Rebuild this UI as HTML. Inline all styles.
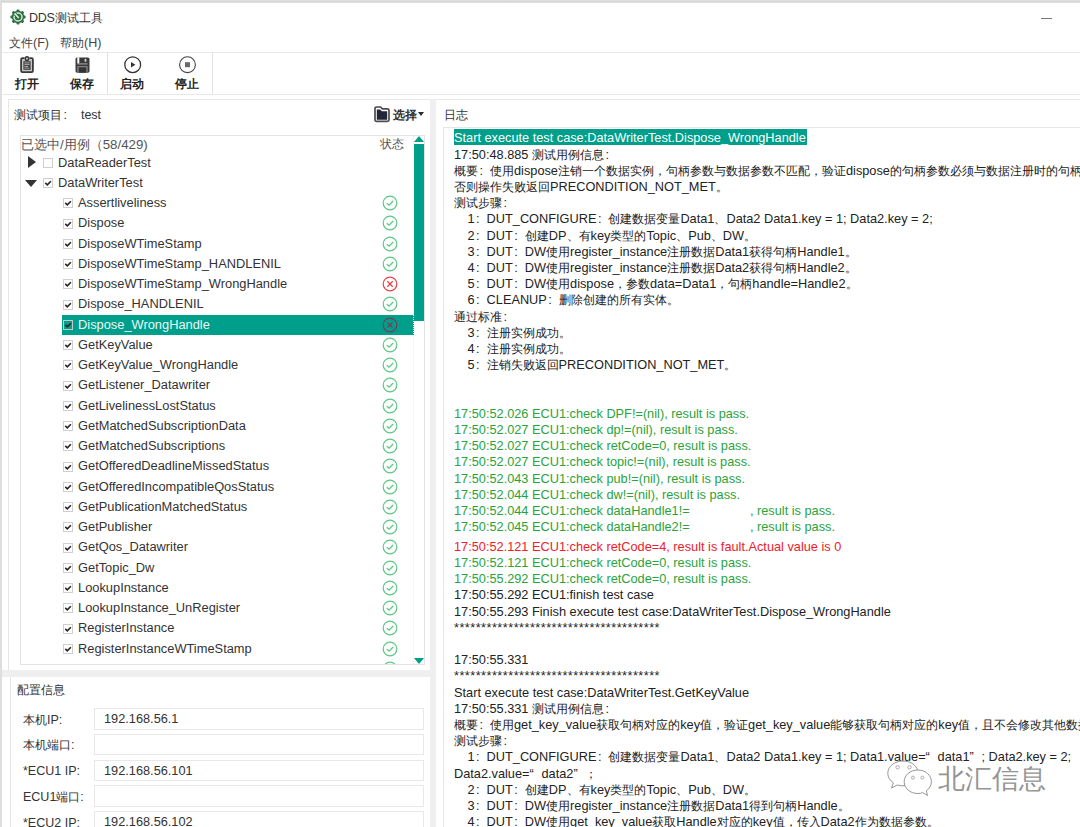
<!DOCTYPE html>
<html><head><meta charset="utf-8">
<style>
*{margin:0;padding:0;box-sizing:border-box}
html,body{width:1080px;height:827px;overflow:hidden;background:#fff}
body{position:relative;font-family:"Liberation Sans",sans-serif;color:#222;font-size:12.75px}
.a{position:absolute}
.c{font-size:12px}
.fw{display:inline-block;width:12px;text-align:left}
.fc{display:inline-block;width:12px;text-align:left;padding-left:1.5px}
#topbar{position:absolute;left:0;top:0;width:1080px;height:3.4px;background:linear-gradient(#e2e2e2,#d5d5d5 60%,#e6e6e6)}
#leftbar{position:absolute;left:0;top:0;width:2px;height:827px;background:#dedede}
#title{position:absolute;left:29px;top:10px;font-size:12.5px;letter-spacing:-0.3px;color:#333;white-space:pre}
#title .c{font-size:12px;letter-spacing:0}
#minbtn{position:absolute;left:1041px;top:18px;width:11px;height:1px;background:#7a7a7a}
.menu{position:absolute;top:34.5px;font-size:12.5px;color:#444;white-space:pre}
.menu .c{font-size:12px}
.fw{display:inline-block;width:12px;text-align:left}
.fc{display:inline-block;width:12px;text-align:left;padding-left:1.5px}
.hl1{position:absolute;left:2px;width:1078px;height:1px;background:#e8e8e8}
.sep{position:absolute;top:52px;width:1px;height:42px;background:#e3e3e3}
.tb{position:absolute;top:76px;font-size:12px;font-weight:bold;color:#222;white-space:pre}
#lp{position:absolute;left:8px;top:99px;width:422px;height:571px;border:1px solid #e6e6e6;border-right:none;border-bottom:none;background:#fff}
#gapv{position:absolute;left:430px;top:99px;width:6px;height:728px;background:#efefef}
#gaph{position:absolute;left:2px;top:670px;width:428px;height:7px;background:#efefef}
#cp{position:absolute;left:10px;top:677px;width:420px;height:150px;border-left:1px solid #e6e6e6;background:#fff}
#rp{position:absolute;left:436px;top:99px;width:644px;height:728px;border-top:1px solid #e6e6e6;background:#fff}
#tree{position:absolute;left:20px;top:135px;width:405px;height:530px;border:1px solid #e3e3e3;background:#fff;overflow:hidden}
.t{position:absolute;font-size:12.5px;color:#555;white-space:pre;line-height:14px}
.t .c{font-size:12px}
.t.hd{font-size:13.3px}
.t.hd .c{font-size:12.7px}
.fw{display:inline-block;width:12px;text-align:left}
.fc{display:inline-block;width:12px;text-align:left;padding-left:1.5px}
.tn{position:absolute;font-size:12.85px;color:#333;white-space:pre;line-height:18px}
.tn.w{color:#eaf7f4}
.cb{position:absolute;width:10px;height:10px;border:1px solid #cfcfcf;background:#fff}
.cb svg{position:absolute;left:0;top:0;display:block}
.cb.s{border-color:#c9c9c9;background:transparent}

.tri-r{position:absolute;width:0;height:0;border-top:6.5px solid transparent;border-bottom:6.5px solid transparent;border-left:8px solid #333}
.tri-d{position:absolute;width:0;height:0;border-left:6px solid transparent;border-right:6px solid transparent;border-top:7px solid #333}
.sel{position:absolute;left:61.5px;width:352px;height:20px;background:#009f8b}
.st{position:absolute;width:16px;height:16px}
.st svg{display:block}
#sbtrack{position:absolute;left:413px;top:136px;width:11px;height:528px;border-left:1px dotted #ebebeb}
#sbup{position:absolute;left:414px;top:136px;width:0;height:0;border-left:5px solid transparent;border-right:5px solid transparent;border-bottom:6px solid #009f8b}
#sbthumb{position:absolute;left:414px;top:143.7px;width:10px;height:177.4px;background:#009f8b}
#sbdn{position:absolute;left:414px;top:658px;width:0;height:0;border-left:5px solid transparent;border-right:5px solid transparent;border-top:6px solid #009f8b}
#logbox{position:absolute;left:443px;top:127px;width:640px;height:705px;border:1px solid #e6e6e6;background:#fff;overflow:hidden}
.ll{position:absolute;left:454px;white-space:pre;line-height:17.2px;height:16px;color:#222}
.ll.hl{background:#009f8b;color:#fff;left:453.5px;padding-left:0.5px;padding-right:1px}
.ll.g{color:#2aa33a}
.ll.r{color:#f0202a}
.ll.ast{letter-spacing:0.46px}
.lab{position:absolute;left:23px;font-size:12.5px;color:#333;white-space:pre;line-height:15px}
.lab .c{font-size:12px}
.fw{display:inline-block;width:12px;text-align:left}
.fc{display:inline-block;width:12px;text-align:left;padding-left:1.5px}
.inp{position:absolute;left:94px;width:330px;height:21.5px;border:1px solid #e8e8e8;background:#fff}
.inp span{position:absolute;left:9px;top:2px;font-size:12.75px;color:#333;white-space:pre;line-height:16px}
</style></head><body>
<div id="topbar"></div>
<div id="leftbar"></div>
<svg class="a" style="left:9.5px;top:9.4px" width="16" height="16" viewBox="0 0 16 16">
 <g fill="#2f7043">
  <circle cx="8" cy="8" r="6.2"/>
  <g>
   <rect x="6.5" y="0.4" width="3" height="3" rx="1"/>
   <rect x="6.5" y="12.6" width="3" height="3" rx="1"/>
   <rect x="0.4" y="6.5" width="3" height="3" rx="1"/>
   <rect x="12.6" y="6.5" width="3" height="3" rx="1"/>
  </g>
  <g transform="rotate(45 8 8)"><rect x="6.5" y="0.4" width="3" height="3" rx="1"/>
   <rect x="6.5" y="12.6" width="3" height="3" rx="1"/>
   <rect x="0.4" y="6.5" width="3" height="3" rx="1"/>
   <rect x="12.6" y="6.5" width="3" height="3" rx="1"/></g>
 </g>
 <circle cx="8" cy="8" r="4" fill="none" stroke="#d3e6d8" stroke-width="1.5"/>
 <circle cx="5.2" cy="5.2" r="1.9" fill="#2f7043"/>
 <path d="M4.6 4.4 L5.6 5.6 L8.8 9" stroke="#e6f1e8" stroke-width="1.5" fill="none"/>
 <path d="M4.5 5.8 L5.8 4.5" stroke="#e6f1e8" stroke-width="1" fill="none"/>
</svg>
<div id="title">DDS<span class="c">测试工具</span></div>
<div id="minbtn"></div>
<div class="menu" style="left:9px"><span class="c">文件</span>(F)</div>
<div class="menu" style="left:60px"><span class="c">帮助</span>(H)</div>
<div class="hl1" style="top:52px"></div>
<div class="hl1" style="top:93.5px"></div>
<div class="sep" style="left:107px"></div>
<div class="sep" style="left:212px"></div>
<!-- toolbar icons -->
<svg class="a" style="left:20px;top:56px" width="14" height="17" viewBox="0 0 14 17">
 <rect x="1.1" y="2.2" width="11.8" height="13.9" rx="1.3" fill="#c4c4c4" stroke="#3a3a3a" stroke-width="1.8"/>
 <rect x="4.5" y="0.6" width="5" height="3" fill="#fff"/>
 <circle cx="7" cy="2.6" r="1.8" fill="#bbb" stroke="#3a3a3a" stroke-width="1.5"/>
 <rect x="3.4" y="5.2" width="7.2" height="8.6" fill="#3e3e3e"/>
 <path d="M4.4 6.9 H9.6 M4.4 8.6 H9.6 M4.4 10.4 H8.2 M4.4 12.1 H9.2" stroke="#b5b5b5" stroke-width="0.9"/>
</svg>
<svg class="a" style="left:74.5px;top:56.5px" width="15" height="16" viewBox="0 0 15 16">
 <rect x="0.5" y="0.5" width="14" height="15.2" rx="1.6" fill="#3a3a3a"/>
 <rect x="2.3" y="0.3" width="2" height="6.2" fill="#fff"/>
 <rect x="2.3" y="6.3" width="10.3" height="1.2" fill="#9a9a9a"/>
 <rect x="9.6" y="1.8" width="1.8" height="3" rx="0.6" fill="#cfcfcf"/>
 <rect x="2.3" y="9.2" width="10.3" height="6.5" fill="#8e8e8e"/>
 <rect x="3.6" y="10.3" width="7.8" height="5.4" fill="#333"/>
</svg>
<svg class="a" style="left:124px;top:55.5px" width="18" height="18" viewBox="0 0 18 18">
 <circle cx="8.7" cy="8.7" r="7.9" fill="none" stroke="#333" stroke-width="1.3"/>
 <path d="M7 6 L11.4 8.7 L7 11.4 Z" fill="#333"/>
</svg>
<svg class="a" style="left:179px;top:55.5px" width="18" height="18" viewBox="0 0 18 18">
 <circle cx="8.5" cy="8.7" r="7.9" fill="none" stroke="#444" stroke-width="1.1"/>
 <rect x="6" y="6.2" width="5" height="5" fill="#6a6a6a"/>
</svg>
<div class="tb" style="left:15px"><span class="c">打开</span></div>
<div class="tb" style="left:70px"><span class="c">保存</span></div>
<div class="tb" style="left:120px"><span class="c">启动</span></div>
<div class="tb" style="left:175px"><span class="c">停止</span></div>

<div id="gapv"></div>
<div id="gaph"></div>
<div id="lp"></div>
<div id="cp"></div>
<div id="rp"></div>
<div class="t" style="left:14px;top:108px;color:#333"><span class="c">测试项目</span><span class="fc">:</span>&nbsp;&nbsp;test</div>
<svg class="a" style="left:374px;top:106px" width="16" height="17" viewBox="0 0 16 17">
 <path d="M1 2.6 Q1 1 2.6 1 H6.6 L8.4 2.8 H13.4 Q15 2.8 15 4.4 V13.8 Q15 15.4 13.4 15.4 H2.6 Q1 15.4 1 13.8 Z" fill="#fff" stroke="#4c4c50" stroke-width="1.7"/>
 <path d="M2.8 3.6 H6.1 L7.8 5.2 H13.2 V13.7 H2.8 Z" fill="#23263a"/>
</svg>
<div class="t" style="left:393px;top:108px;font-weight:bold;color:#333"><span class="c">选择</span></div>
<div class="a" style="left:417.5px;top:112.3px;width:0;height:0;border-left:3.6px solid transparent;border-right:3.6px solid transparent;border-top:4.5px solid #2a2a2a"></div>
<div class="t" style="left:444px;top:108px;color:#333"><span class="c">日志</span></div>

<div id="tree"></div>
<div style="position:absolute;left:0;top:0;width:1080px;height:827px;clip-path:inset(136px 656px 163px 21px)">
<div class="t hd" style="left:21px;top:137.5px;"><span class="c">已选中</span>/<span class="c">用例（</span>58/429)</div>
<div class="t" style="left:380px;top:137px;"><span class="c">状态</span></div>
<div class="tri-r" style="left:28px;top:156.1px"></div>
<div class="cb" style="left:43px;top:158.1px"></div>
<div class="tn" style="left:58px;top:153.6px">DataReaderTest</div>
<div class="tri-d" style="left:25px;top:179.5px"></div>
<div class="cb on" style="left:43px;top:178.3px"><svg width="8" height="8" viewBox="0 0 8 8"><path d="M1.3 3.9 L3.3 5.8 L6.9 2.2" fill="none" stroke="#262626" stroke-width="1.6"/></svg></div>
<div class="tn" style="left:58px;top:173.8px">DataWriterTest</div>
<div class="cb on" style="left:63.2px;top:198.3px"><svg width="8" height="8" viewBox="0 0 8 8"><path d="M1.3 3.9 L3.3 5.8 L6.9 2.2" fill="none" stroke="#262626" stroke-width="1.6"/></svg></div>
<div class="tn" style="left:78px;top:194.1px">Assertliveliness</div>
<div class="st" style="left:382px;top:195.1px"><svg width="16" height="16" viewBox="0 0 16 16"><circle cx="8" cy="8" r="6.8" fill="none" stroke="#5cc782" stroke-width="1.2"/><path d="M4.8 8.2 L7 10.2 L11.2 6" fill="none" stroke="#5cc782" stroke-width="1.3"/></svg></div>
<div class="cb on" style="left:63.2px;top:218.5px"><svg width="8" height="8" viewBox="0 0 8 8"><path d="M1.3 3.9 L3.3 5.8 L6.9 2.2" fill="none" stroke="#262626" stroke-width="1.6"/></svg></div>
<div class="tn" style="left:78px;top:214.3px">Dispose</div>
<div class="st" style="left:382px;top:215.3px"><svg width="16" height="16" viewBox="0 0 16 16"><circle cx="8" cy="8" r="6.8" fill="none" stroke="#5cc782" stroke-width="1.2"/><path d="M4.8 8.2 L7 10.2 L11.2 6" fill="none" stroke="#5cc782" stroke-width="1.3"/></svg></div>
<div class="cb on" style="left:63.2px;top:238.8px"><svg width="8" height="8" viewBox="0 0 8 8"><path d="M1.3 3.9 L3.3 5.8 L6.9 2.2" fill="none" stroke="#262626" stroke-width="1.6"/></svg></div>
<div class="tn" style="left:78px;top:234.6px">DisposeWTimeStamp</div>
<div class="st" style="left:382px;top:235.6px"><svg width="16" height="16" viewBox="0 0 16 16"><circle cx="8" cy="8" r="6.8" fill="none" stroke="#5cc782" stroke-width="1.2"/><path d="M4.8 8.2 L7 10.2 L11.2 6" fill="none" stroke="#5cc782" stroke-width="1.3"/></svg></div>
<div class="cb on" style="left:63.2px;top:259.1px"><svg width="8" height="8" viewBox="0 0 8 8"><path d="M1.3 3.9 L3.3 5.8 L6.9 2.2" fill="none" stroke="#262626" stroke-width="1.6"/></svg></div>
<div class="tn" style="left:78px;top:254.9px">DisposeWTimeStamp_HANDLENIL</div>
<div class="st" style="left:382px;top:255.9px"><svg width="16" height="16" viewBox="0 0 16 16"><circle cx="8" cy="8" r="6.8" fill="none" stroke="#5cc782" stroke-width="1.2"/><path d="M4.8 8.2 L7 10.2 L11.2 6" fill="none" stroke="#5cc782" stroke-width="1.3"/></svg></div>
<div class="cb on" style="left:63.2px;top:279.3px"><svg width="8" height="8" viewBox="0 0 8 8"><path d="M1.3 3.9 L3.3 5.8 L6.9 2.2" fill="none" stroke="#262626" stroke-width="1.6"/></svg></div>
<div class="tn" style="left:78px;top:275.1px">DisposeWTimeStamp_WrongHandle</div>
<div class="st" style="left:382px;top:276.1px"><svg width="16" height="16" viewBox="0 0 16 16"><circle cx="8" cy="8" r="6.8" fill="none" stroke="#ea3f45" stroke-width="1.2"/><path d="M5.3 5.3 L10.7 10.7 M10.7 5.3 L5.3 10.7" fill="none" stroke="#ea3f45" stroke-width="1.3"/></svg></div>
<div class="cb on" style="left:63.2px;top:299.6px"><svg width="8" height="8" viewBox="0 0 8 8"><path d="M1.3 3.9 L3.3 5.8 L6.9 2.2" fill="none" stroke="#262626" stroke-width="1.6"/></svg></div>
<div class="tn" style="left:78px;top:295.4px">Dispose_HANDLENIL</div>
<div class="st" style="left:382px;top:296.4px"><svg width="16" height="16" viewBox="0 0 16 16"><circle cx="8" cy="8" r="6.8" fill="none" stroke="#5cc782" stroke-width="1.2"/><path d="M4.8 8.2 L7 10.2 L11.2 6" fill="none" stroke="#5cc782" stroke-width="1.3"/></svg></div>
<div class="sel" style="top:314.6px"></div>
<div class="cb on s" style="left:63.2px;top:319.8px"><svg width="8" height="8" viewBox="0 0 8 8"><path d="M1.3 3.9 L3.3 5.8 L6.9 2.2" fill="none" stroke="#262626" stroke-width="1.6"/></svg></div>
<div class="tn w" style="left:78px;top:315.6px">Dispose_WrongHandle</div>
<div class="st" style="left:382px;top:316.6px"><svg width="16" height="16" viewBox="0 0 16 16"><circle cx="8" cy="8" r="6.8" fill="none" stroke="#7a3b55" stroke-width="1.2"/><path d="M5.6 5.6 L10.4 10.4 M10.4 5.6 L5.6 10.4" fill="none" stroke="#8a3050" stroke-width="1.3"/></svg></div>
<div class="cb on" style="left:63.2px;top:340.1px"><svg width="8" height="8" viewBox="0 0 8 8"><path d="M1.3 3.9 L3.3 5.8 L6.9 2.2" fill="none" stroke="#262626" stroke-width="1.6"/></svg></div>
<div class="tn" style="left:78px;top:335.9px">GetKeyValue</div>
<div class="st" style="left:382px;top:336.9px"><svg width="16" height="16" viewBox="0 0 16 16"><circle cx="8" cy="8" r="6.8" fill="none" stroke="#5cc782" stroke-width="1.2"/><path d="M4.8 8.2 L7 10.2 L11.2 6" fill="none" stroke="#5cc782" stroke-width="1.3"/></svg></div>
<div class="cb on" style="left:63.2px;top:360.3px"><svg width="8" height="8" viewBox="0 0 8 8"><path d="M1.3 3.9 L3.3 5.8 L6.9 2.2" fill="none" stroke="#262626" stroke-width="1.6"/></svg></div>
<div class="tn" style="left:78px;top:356.1px">GetKeyValue_WrongHandle</div>
<div class="st" style="left:382px;top:357.1px"><svg width="16" height="16" viewBox="0 0 16 16"><circle cx="8" cy="8" r="6.8" fill="none" stroke="#5cc782" stroke-width="1.2"/><path d="M4.8 8.2 L7 10.2 L11.2 6" fill="none" stroke="#5cc782" stroke-width="1.3"/></svg></div>
<div class="cb on" style="left:63.2px;top:380.6px"><svg width="8" height="8" viewBox="0 0 8 8"><path d="M1.3 3.9 L3.3 5.8 L6.9 2.2" fill="none" stroke="#262626" stroke-width="1.6"/></svg></div>
<div class="tn" style="left:78px;top:376.4px">GetListener_Datawriter</div>
<div class="st" style="left:382px;top:377.4px"><svg width="16" height="16" viewBox="0 0 16 16"><circle cx="8" cy="8" r="6.8" fill="none" stroke="#5cc782" stroke-width="1.2"/><path d="M4.8 8.2 L7 10.2 L11.2 6" fill="none" stroke="#5cc782" stroke-width="1.3"/></svg></div>
<div class="cb on" style="left:63.2px;top:400.8px"><svg width="8" height="8" viewBox="0 0 8 8"><path d="M1.3 3.9 L3.3 5.8 L6.9 2.2" fill="none" stroke="#262626" stroke-width="1.6"/></svg></div>
<div class="tn" style="left:78px;top:396.6px">GetLivelinessLostStatus</div>
<div class="st" style="left:382px;top:397.6px"><svg width="16" height="16" viewBox="0 0 16 16"><circle cx="8" cy="8" r="6.8" fill="none" stroke="#5cc782" stroke-width="1.2"/><path d="M4.8 8.2 L7 10.2 L11.2 6" fill="none" stroke="#5cc782" stroke-width="1.3"/></svg></div>
<div class="cb on" style="left:63.2px;top:421.1px"><svg width="8" height="8" viewBox="0 0 8 8"><path d="M1.3 3.9 L3.3 5.8 L6.9 2.2" fill="none" stroke="#262626" stroke-width="1.6"/></svg></div>
<div class="tn" style="left:78px;top:416.9px">GetMatchedSubscriptionData</div>
<div class="st" style="left:382px;top:417.9px"><svg width="16" height="16" viewBox="0 0 16 16"><circle cx="8" cy="8" r="6.8" fill="none" stroke="#5cc782" stroke-width="1.2"/><path d="M4.8 8.2 L7 10.2 L11.2 6" fill="none" stroke="#5cc782" stroke-width="1.3"/></svg></div>
<div class="cb on" style="left:63.2px;top:441.3px"><svg width="8" height="8" viewBox="0 0 8 8"><path d="M1.3 3.9 L3.3 5.8 L6.9 2.2" fill="none" stroke="#262626" stroke-width="1.6"/></svg></div>
<div class="tn" style="left:78px;top:437.1px">GetMatchedSubscriptions</div>
<div class="st" style="left:382px;top:438.1px"><svg width="16" height="16" viewBox="0 0 16 16"><circle cx="8" cy="8" r="6.8" fill="none" stroke="#5cc782" stroke-width="1.2"/><path d="M4.8 8.2 L7 10.2 L11.2 6" fill="none" stroke="#5cc782" stroke-width="1.3"/></svg></div>
<div class="cb on" style="left:63.2px;top:461.6px"><svg width="8" height="8" viewBox="0 0 8 8"><path d="M1.3 3.9 L3.3 5.8 L6.9 2.2" fill="none" stroke="#262626" stroke-width="1.6"/></svg></div>
<div class="tn" style="left:78px;top:457.4px">GetOfferedDeadlineMissedStatus</div>
<div class="st" style="left:382px;top:458.4px"><svg width="16" height="16" viewBox="0 0 16 16"><circle cx="8" cy="8" r="6.8" fill="none" stroke="#5cc782" stroke-width="1.2"/><path d="M4.8 8.2 L7 10.2 L11.2 6" fill="none" stroke="#5cc782" stroke-width="1.3"/></svg></div>
<div class="cb on" style="left:63.2px;top:481.8px"><svg width="8" height="8" viewBox="0 0 8 8"><path d="M1.3 3.9 L3.3 5.8 L6.9 2.2" fill="none" stroke="#262626" stroke-width="1.6"/></svg></div>
<div class="tn" style="left:78px;top:477.6px">GetOfferedIncompatibleQosStatus</div>
<div class="st" style="left:382px;top:478.6px"><svg width="16" height="16" viewBox="0 0 16 16"><circle cx="8" cy="8" r="6.8" fill="none" stroke="#5cc782" stroke-width="1.2"/><path d="M4.8 8.2 L7 10.2 L11.2 6" fill="none" stroke="#5cc782" stroke-width="1.3"/></svg></div>
<div class="cb on" style="left:63.2px;top:502.1px"><svg width="8" height="8" viewBox="0 0 8 8"><path d="M1.3 3.9 L3.3 5.8 L6.9 2.2" fill="none" stroke="#262626" stroke-width="1.6"/></svg></div>
<div class="tn" style="left:78px;top:497.9px">GetPublicationMatchedStatus</div>
<div class="st" style="left:382px;top:498.9px"><svg width="16" height="16" viewBox="0 0 16 16"><circle cx="8" cy="8" r="6.8" fill="none" stroke="#5cc782" stroke-width="1.2"/><path d="M4.8 8.2 L7 10.2 L11.2 6" fill="none" stroke="#5cc782" stroke-width="1.3"/></svg></div>
<div class="cb on" style="left:63.2px;top:522.3px"><svg width="8" height="8" viewBox="0 0 8 8"><path d="M1.3 3.9 L3.3 5.8 L6.9 2.2" fill="none" stroke="#262626" stroke-width="1.6"/></svg></div>
<div class="tn" style="left:78px;top:518.1px">GetPublisher</div>
<div class="st" style="left:382px;top:519.1px"><svg width="16" height="16" viewBox="0 0 16 16"><circle cx="8" cy="8" r="6.8" fill="none" stroke="#5cc782" stroke-width="1.2"/><path d="M4.8 8.2 L7 10.2 L11.2 6" fill="none" stroke="#5cc782" stroke-width="1.3"/></svg></div>
<div class="cb on" style="left:63.2px;top:542.6px"><svg width="8" height="8" viewBox="0 0 8 8"><path d="M1.3 3.9 L3.3 5.8 L6.9 2.2" fill="none" stroke="#262626" stroke-width="1.6"/></svg></div>
<div class="tn" style="left:78px;top:538.4px">GetQos_Datawriter</div>
<div class="st" style="left:382px;top:539.4px"><svg width="16" height="16" viewBox="0 0 16 16"><circle cx="8" cy="8" r="6.8" fill="none" stroke="#5cc782" stroke-width="1.2"/><path d="M4.8 8.2 L7 10.2 L11.2 6" fill="none" stroke="#5cc782" stroke-width="1.3"/></svg></div>
<div class="cb on" style="left:63.2px;top:562.8px"><svg width="8" height="8" viewBox="0 0 8 8"><path d="M1.3 3.9 L3.3 5.8 L6.9 2.2" fill="none" stroke="#262626" stroke-width="1.6"/></svg></div>
<div class="tn" style="left:78px;top:558.6px">GetTopic_Dw</div>
<div class="st" style="left:382px;top:559.6px"><svg width="16" height="16" viewBox="0 0 16 16"><circle cx="8" cy="8" r="6.8" fill="none" stroke="#5cc782" stroke-width="1.2"/><path d="M4.8 8.2 L7 10.2 L11.2 6" fill="none" stroke="#5cc782" stroke-width="1.3"/></svg></div>
<div class="cb on" style="left:63.2px;top:583.1px"><svg width="8" height="8" viewBox="0 0 8 8"><path d="M1.3 3.9 L3.3 5.8 L6.9 2.2" fill="none" stroke="#262626" stroke-width="1.6"/></svg></div>
<div class="tn" style="left:78px;top:578.9px">LookupInstance</div>
<div class="st" style="left:382px;top:579.9px"><svg width="16" height="16" viewBox="0 0 16 16"><circle cx="8" cy="8" r="6.8" fill="none" stroke="#5cc782" stroke-width="1.2"/><path d="M4.8 8.2 L7 10.2 L11.2 6" fill="none" stroke="#5cc782" stroke-width="1.3"/></svg></div>
<div class="cb on" style="left:63.2px;top:603.3px"><svg width="8" height="8" viewBox="0 0 8 8"><path d="M1.3 3.9 L3.3 5.8 L6.9 2.2" fill="none" stroke="#262626" stroke-width="1.6"/></svg></div>
<div class="tn" style="left:78px;top:599.1px">LookupInstance_UnRegister</div>
<div class="st" style="left:382px;top:600.1px"><svg width="16" height="16" viewBox="0 0 16 16"><circle cx="8" cy="8" r="6.8" fill="none" stroke="#5cc782" stroke-width="1.2"/><path d="M4.8 8.2 L7 10.2 L11.2 6" fill="none" stroke="#5cc782" stroke-width="1.3"/></svg></div>
<div class="cb on" style="left:63.2px;top:623.6px"><svg width="8" height="8" viewBox="0 0 8 8"><path d="M1.3 3.9 L3.3 5.8 L6.9 2.2" fill="none" stroke="#262626" stroke-width="1.6"/></svg></div>
<div class="tn" style="left:78px;top:619.4px">RegisterInstance</div>
<div class="st" style="left:382px;top:620.4px"><svg width="16" height="16" viewBox="0 0 16 16"><circle cx="8" cy="8" r="6.8" fill="none" stroke="#5cc782" stroke-width="1.2"/><path d="M4.8 8.2 L7 10.2 L11.2 6" fill="none" stroke="#5cc782" stroke-width="1.3"/></svg></div>
<div class="cb on" style="left:63.2px;top:643.8px"><svg width="8" height="8" viewBox="0 0 8 8"><path d="M1.3 3.9 L3.3 5.8 L6.9 2.2" fill="none" stroke="#262626" stroke-width="1.6"/></svg></div>
<div class="tn" style="left:78px;top:639.6px">RegisterInstanceWTimeStamp</div>
<div class="st" style="left:382px;top:640.6px"><svg width="16" height="16" viewBox="0 0 16 16"><circle cx="8" cy="8" r="6.8" fill="none" stroke="#5cc782" stroke-width="1.2"/><path d="M4.8 8.2 L7 10.2 L11.2 6" fill="none" stroke="#5cc782" stroke-width="1.3"/></svg></div>
<div class="cb on" style="left:63.2px;top:664.1px"><svg width="8" height="8" viewBox="0 0 8 8"><path d="M1.3 3.9 L3.3 5.8 L6.9 2.2" fill="none" stroke="#262626" stroke-width="1.6"/></svg></div>
<div class="tn" style="left:78px;top:659.9px">RegisterInstanceX</div>
<div class="st" style="left:382px;top:660.9px"><svg width="16" height="16" viewBox="0 0 16 16"><circle cx="8" cy="8" r="6.8" fill="none" stroke="#5cc782" stroke-width="1.2"/><path d="M4.8 8.2 L7 10.2 L11.2 6" fill="none" stroke="#5cc782" stroke-width="1.3"/></svg></div>
</div>
<div id="sbtrack"></div>
<div id="sbup"></div>
<div id="sbthumb"></div>
<div id="sbdn"></div>

<div id="logbox"></div>
<div class="ll hl" style="top:129.3px;">Start execute test case:DataWriterTest.Dispose_WrongHandle</div>
<div class="ll " style="top:145.5px;">17:50:48.885 <span class="c">测试用例信息</span><span class="fc">:</span></div>
<div class="ll " style="top:161.7px;"><span class="c">概要</span><span class="fc">:</span><span class="c">使用</span>dispose<span class="c">注销一个数据实例，句柄参数与数据参数不匹配，验证</span>dispose<span class="c">的句柄参数必须与数据注册时的句柄一致，</span></div>
<div class="ll " style="top:177.9px;"><span class="c">否则操作失败返回</span>PRECONDITION_NOT_MET<span class="c">。</span></div>
<div class="ll " style="top:194.1px;"><span class="c">测试步骤</span><span class="fc">:</span></div>
<div class="ll " style="top:210.3px;padding-left:13.5px;">1<span class="fc">:</span>DUT_CONFIGURE<span class="fc">:</span><span class="c">创建数据变量</span>Data1<span class="c">、</span>Data2 Data1.key = 1; Data2.key = 2;</div>
<div class="ll " style="top:226.5px;padding-left:13.5px;">2<span class="fc">:</span>DUT<span class="fc">:</span><span class="c">创建</span>DP<span class="c">、有</span>key<span class="c">类型的</span>Topic<span class="c">、</span>Pub<span class="c">、</span>DW<span class="c">。</span></div>
<div class="ll " style="top:242.7px;padding-left:13.5px;">3<span class="fc">:</span>DUT<span class="fc">:</span>DW<span class="c">使用</span>register_instance<span class="c">注册数据</span>Data1<span class="c">获得句柄</span>Handle1<span class="c">。</span></div>
<div class="ll " style="top:258.9px;padding-left:13.5px;">4<span class="fc">:</span>DUT<span class="fc">:</span>DW<span class="c">使用</span>register_instance<span class="c">注册数据</span>Data2<span class="c">获得句柄</span>Handle2<span class="c">。</span></div>
<div class="ll " style="top:275.1px;padding-left:13.5px;">5<span class="fc">:</span>DUT<span class="fc">:</span>DW<span class="c">使用</span>dispose<span class="c">，参数</span>data=Data1<span class="c">，句柄</span>handle=Handle2<span class="c">。</span></div>
<div class="ll " style="top:291.3px;padding-left:13.5px;">6<span class="fc">:</span>CLEANUP<span class="fc">:</span><span class="c">删除创建的所有实体。</span></div>
<div class="ll " style="top:307.5px;"><span class="c">通过标准</span><span class="fc">:</span></div>
<div class="ll " style="top:323.7px;padding-left:13.5px;">3<span class="fc">:</span><span class="c">注册实例成功。</span></div>
<div class="ll " style="top:339.9px;padding-left:13.5px;">4<span class="fc">:</span><span class="c">注册实例成功。</span></div>
<div class="ll " style="top:356.1px;padding-left:13.5px;">5<span class="fc">:</span><span class="c">注销失败返回</span>PRECONDITION_NOT_MET<span class="c">。</span></div>
<div class="ll g" style="top:404.7px;">17:50:52.026 ECU1:check DPF!=(nil), result is pass.</div>
<div class="ll g" style="top:420.9px;">17:50:52.027 ECU1:check dp!=(nil), result is pass.</div>
<div class="ll g" style="top:437.1px;">17:50:52.027 ECU1:check retCode=0, result is pass.</div>
<div class="ll g" style="top:453.3px;">17:50:52.027 ECU1:check topic!=(nil), result is pass.</div>
<div class="ll g" style="top:469.5px;">17:50:52.043 ECU1:check pub!=(nil), result is pass.</div>
<div class="ll g" style="top:485.7px;">17:50:52.044 ECU1:check dw!=(nil), result is pass.</div>
<div class="ll g" style="top:501.9px;">17:50:52.044 ECU1:check dataHandle1!=                 , result is pass.</div>
<div class="ll g" style="top:518.1px;">17:50:52.045 ECU1:check dataHandle2!=                 , result is pass.</div>
<div class="ll r" style="top:537.8px;">17:50:52.121 ECU1:check retCode=4, result is fault.Actual value is 0</div>
<div class="ll g" style="top:554.0px;">17:50:52.121 ECU1:check retCode=0, result is pass.</div>
<div class="ll g" style="top:570.2px;">17:50:55.292 ECU1:check retCode=0, result is pass.</div>
<div class="ll " style="top:586.4px;">17:50:55.292 ECU1:finish test case</div>
<div class="ll " style="top:602.6px;">17:50:55.293 Finish execute test case:DataWriterTest.Dispose_WrongHandle</div>
<div class="ll ast" style="top:618.8px;">**************************************</div>
<div class="ll " style="top:651.2px;">17:50:55.331</div>
<div class="ll ast" style="top:667.4px;">**************************************</div>
<div class="ll " style="top:683.6px;">Start execute test case:DataWriterTest.GetKeyValue</div>
<div class="ll " style="top:699.8px;">17:50:55.331 <span class="c">测试用例信息</span><span class="fc">:</span></div>
<div class="ll " style="top:716.0px;"><span class="c">概要</span><span class="fc">:</span><span class="c">使用</span>get_key_value<span class="c">获取句柄对应的</span>key<span class="c">值，验证</span>get_key_value<span class="c">能够获取句柄对应的</span>key<span class="c">值，且不会修改其他数据。</span></div>
<div class="ll " style="top:732.2px;"><span class="c">测试步骤</span><span class="fc">:</span></div>
<div class="ll " style="top:748.4px;padding-left:13.5px;">1<span class="fc">:</span>DUT_CONFIGURE<span class="fc">:</span><span class="c">创建数据变量</span>Data1<span class="c">、</span>Data2 Data1.key = 1; Data1.value=<span class="fw">“</span>data1<span class="fw">”</span>; Data2.key = 2;</div>
<div class="ll " style="top:764.6px;">Data2.value=<span class="fw">“</span>data2<span class="fw">”</span><span class="c">；</span></div>
<div class="ll " style="top:780.8px;padding-left:13.5px;">2<span class="fc">:</span>DUT<span class="fc">:</span><span class="c">创建</span>DP<span class="c">、有</span>key<span class="c">类型的</span>Topic<span class="c">、</span>Pub<span class="c">、</span>DW<span class="c">。</span></div>
<div class="ll " style="top:797.0px;padding-left:13.5px;">3<span class="fc">:</span>DUT<span class="fc">:</span>DW<span class="c">使用</span>register_instance<span class="c">注册数据</span>Data1<span class="c">得到句柄</span>Handle<span class="c">。</span></div>
<div class="ll " style="top:813.2px;padding-left:13.5px;">4<span class="fc">:</span>DUT<span class="fc">:</span>DW<span class="c">使用</span>get_key_value<span class="c">获取</span>Handle<span class="c">对应的</span>key<span class="c">值，传入</span>Data2<span class="c">作为数据参数。</span></div>

<div class="t" style="left:17px;top:683px;color:#333"><span class="c">配置信息</span></div>
<div class="lab" style="top:712.7px"><span class="c">本机</span>IP:</div>
<div class="inp" style="top:708.2px"><span>192.168.56.1</span></div>
<div class="lab" style="top:738.4px"><span class="c">本机端口</span>:</div>
<div class="inp" style="top:733.9px"><span></span></div>
<div class="lab" style="top:764.1px">*ECU1 IP:</div>
<div class="inp" style="top:759.6px"><span>192.168.56.101</span></div>
<div class="lab" style="top:789.8px">ECU1<span class="c">端口</span>:</div>
<div class="inp" style="top:785.3px"><span></span></div>
<div class="lab" style="top:815.5px">*ECU2 IP:</div>
<div class="inp" style="top:811.0px"><span>192.168.56.102</span></div>
<svg class="a" style="left:884px;top:757px" width="52" height="42" viewBox="884 757 52 42">
 <path d="M903 761 C894.5 761 887.8 766.5 887.8 773.3 C887.8 777.2 890 780.6 893.4 782.8 L891.5 788 L897.3 785 C899.2 785.5 901.1 785.8 903 785.8 C911.5 785.8 918.2 780.3 918.2 773.3 C918.2 766.5 911.5 761 903 761 Z" fill="#fff" stroke="#8a8a8a" stroke-width="0.9"/>
 <circle cx="897.6" cy="767.3" r="1.7" fill="#fff" stroke="#999" stroke-width="0.8"/>
 <circle cx="909.5" cy="767.3" r="1.7" fill="#fff" stroke="#999" stroke-width="0.8"/>
 <path d="M917.8 770 C910.2 770 904.2 775.2 904.2 781.7 C904.2 788.3 910.2 793.5 917.8 793.5 C919.5 793.5 921.2 793.2 922.7 792.7 L927.5 795.5 L926.3 790.8 C929.5 788.7 931.4 785.400 931.4 781.7 C931.4 775.2 925.4 770 917.8 770 Z" fill="#fff" stroke="#8a8a8a" stroke-width="0.9"/>
 <circle cx="913" cy="777.6" r="1.5" fill="#fff" stroke="#999" stroke-width="0.8"/>
 <circle cx="922.4" cy="777.6" r="1.5" fill="#fff" stroke="#999" stroke-width="0.8"/>
</svg>
<div class="a" style="left:938px;top:761px;font-size:26.5px;font-weight:100;color:#959595;white-space:pre;line-height:36px;letter-spacing:0px">北汇信息</div>
</body></html>
